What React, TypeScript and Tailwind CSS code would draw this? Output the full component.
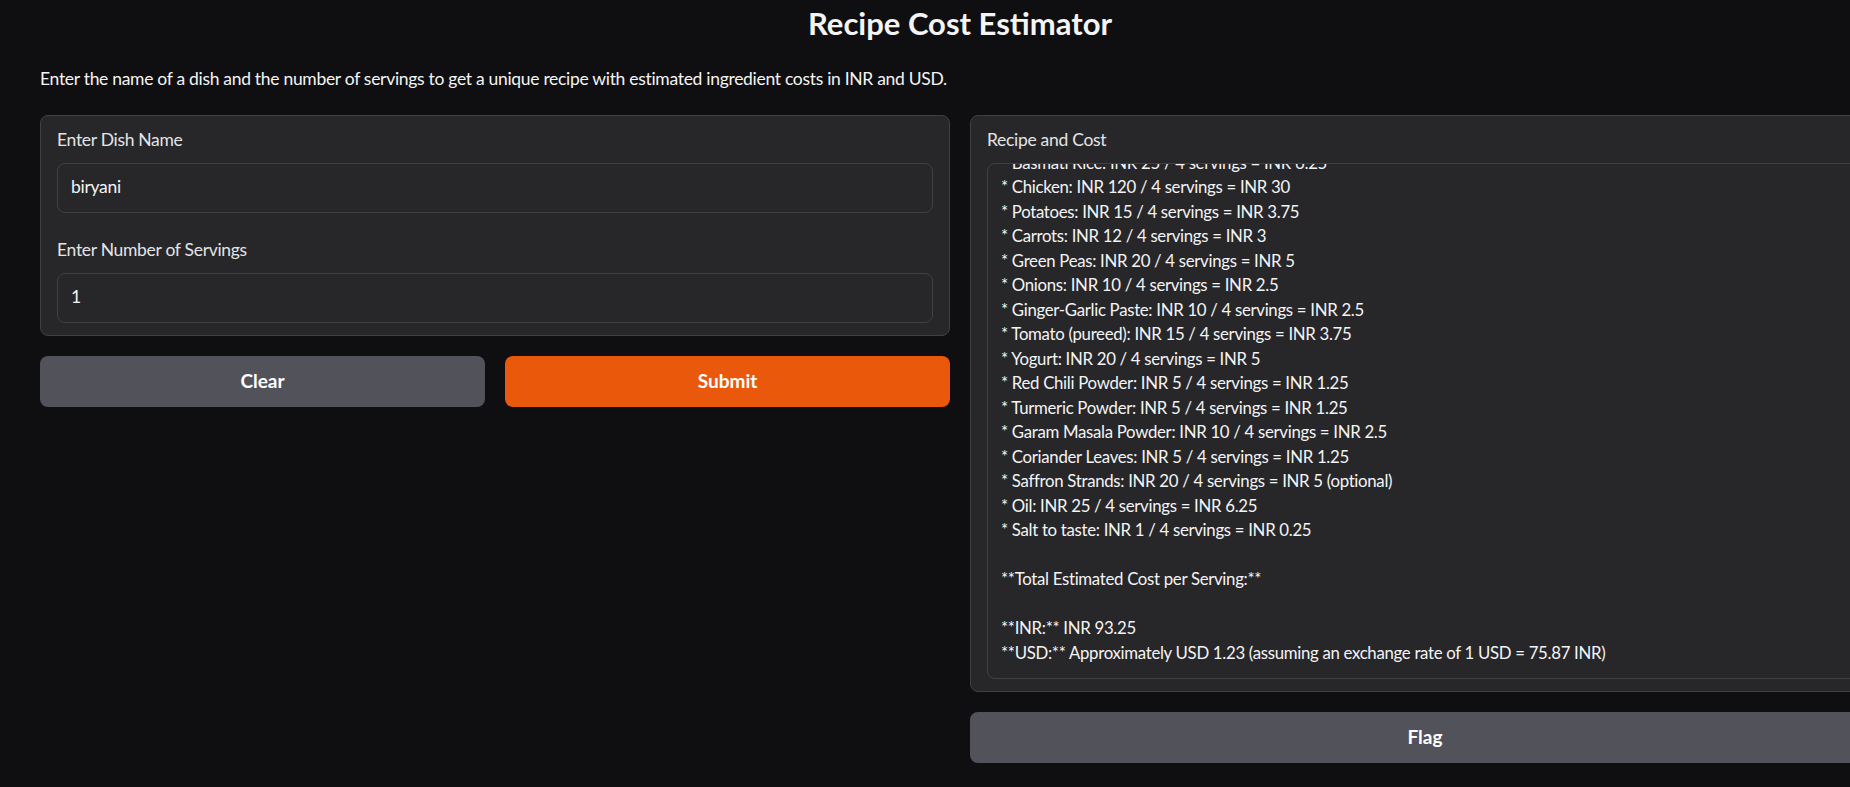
// Recipe Cost Estimator – dark Gradio-style page
// Page is laid out at 1920px wide and clipped to the window, like the screenshot.

const recipeLines = [
  "* Basmati Rice: INR 25 / 4 servings = INR 6.25",
  "* Chicken: INR 120 / 4 servings = INR 30",
  "* Potatoes: INR 15 / 4 servings = INR 3.75",
  "* Carrots: INR 12 / 4 servings = INR 3",
  "* Green Peas: INR 20 / 4 servings = INR 5",
  "* Onions: INR 10 / 4 servings = INR 2.5",
  "* Ginger-Garlic Paste: INR 10 / 4 servings = INR 2.5",
  "* Tomato (pureed): INR 15 / 4 servings = INR 3.75",
  "* Yogurt: INR 20 / 4 servings = INR 5",
  "* Red Chili Powder: INR 5 / 4 servings = INR 1.25",
  "* Turmeric Powder: INR 5 / 4 servings = INR 1.25",
  "* Garam Masala Powder: INR 10 / 4 servings = INR 2.5",
  "* Coriander Leaves: INR 5 / 4 servings = INR 1.25",
  "* Saffron Strands: INR 20 / 4 servings = INR 5 (optional)",
  "* Oil: INR 25 / 4 servings = INR 6.25",
  "* Salt to taste: INR 1 / 4 servings = INR 0.25",
  "",
  "**Total Estimated Cost per Serving:**",
  "",
  "**INR:** INR 93.25",
  "**USD:** Approximately USD 1.23 (assuming an exchange rate of 1 USD = 75.87 INR)",
];

const Field = ({ label, value }: { label: string; value: string }) => (
  <div className="flex flex-col">
    <span className="mb-[11px] text-[17.5px] leading-[24px] text-[#e4e4e7]">{label}</span>
    <div className="flex h-[50px] items-center rounded-lg border border-[#3f3f46] bg-[#27272a] px-[13px] text-[17.5px] text-[#f4f4f5]">
      {value}
    </div>
  </div>
);

export default function App() {
  return (
    <div className="min-h-screen w-full overflow-hidden bg-[#0f0f11] font-['Lato','Noto_Sans',sans-serif] tracking-[-0.3px] text-[#f4f4f5]">
      <div className="w-[1920px] px-10">
        {/* Title */}
        <h1 className="text-center text-[31px] font-bold leading-[46px] tracking-normal">Recipe Cost Estimator</h1>

        {/* Description */}
        <p className="mt-[21px] text-[17.5px] leading-[24.5px]">
          Enter the name of a dish and the number of servings to get a unique recipe with estimated ingredient costs in INR and USD.
        </p>

        <div className="mt-[23px] grid grid-cols-2 items-start gap-5">
          {/* Left column: inputs + buttons */}
          <div className="flex flex-col gap-5">
            <div className="flex flex-col gap-[25px] rounded-lg border border-[#3f3f46] bg-[#27272a] px-4 pt-3 pb-3">
              <Field label="Enter Dish Name" value="biryani" />
              <Field label="Enter Number of Servings" value="1" />
            </div>
            <div className="grid grid-cols-2 gap-5">
              <button className="h-[51px] rounded-lg bg-[#52525b] text-[19px] font-bold tracking-normal text-white">Clear</button>
              <button className="h-[51px] rounded-lg bg-[#ea580c] text-[19px] font-bold tracking-normal text-white">Submit</button>
            </div>
          </div>

          {/* Right column: output + flag */}
          <div className="flex flex-col gap-5">
            <div className="flex flex-col rounded-lg border border-[#3f3f46] bg-[#27272a] px-4 pt-3 pb-3">
              <span className="mb-[11px] text-[17.5px] leading-[24px] text-[#e4e4e7]">Recipe and Cost</span>
              {/* scrolled to the bottom: overflow at the top is clipped */}
              <div className="flex h-[516px] flex-col justify-end overflow-hidden rounded-lg border border-[#3f3f46] bg-[#27272a] px-[13px] pb-[12.5px] text-[16.8px] leading-[24.5px]">
                {recipeLines.map((line, i) => (
                  <div key={i} className="h-[24.5px] shrink-0 whitespace-pre">
                    {line}
                  </div>
                ))}
              </div>
            </div>
            <button className="h-[51px] rounded-lg bg-[#52525b] text-[19px] font-bold tracking-normal text-white">Flag</button>
          </div>
        </div>
      </div>
    </div>
  );
}
